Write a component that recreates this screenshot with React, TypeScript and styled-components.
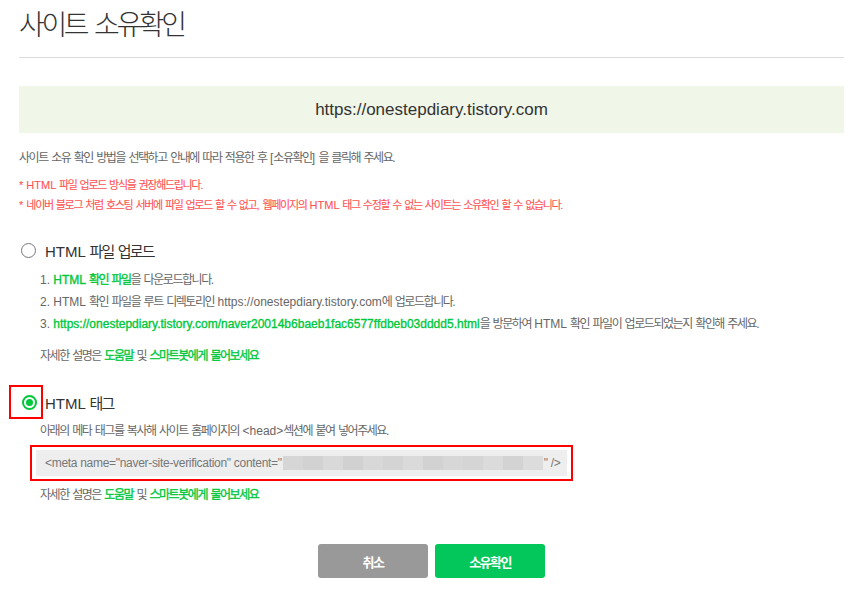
import React from 'react';
import styled, { createGlobalStyle } from 'styled-components';

const Global = createGlobalStyle`
  html, body { margin: 0; padding: 0; background: #fff; }
  body {
    font-family: "Liberation Sans", "Noto Sans CJK KR", sans-serif;
    color: #666;
  }
`;

const Hg = styled.span`
  letter-spacing: -0.12em;
`;

const HANGUL = /([\u1100-\u11ff\u3130-\u318f\uac00-\ud7a3]+)/;
function ko(text: string): React.ReactNode[] {
  return text.split(HANGUL).map((part, i) => (i % 2 === 1 ? <Hg key={i}>{part}</Hg> : part));
}

const Page = styled.div`
  width: 825px;
  padding: 0 11px 0 19px;
`;

const Header = styled.header`
  height: 57px;
  border-bottom: 1px solid #dcdcdc;
`;

const Title = styled.h1`
  margin: 0;
  padding-top: 2px;
  font-size: 28px;
  line-height: 48px;
  font-weight: 300;
  color: #333;
`;

const SiteBox = styled.div`
  margin-top: 28px;
  height: 47px;
  background: #f0f6e8;
  display: flex;
  align-items: center;
  justify-content: center;
  font-size: 17px;
  color: #333;
`;

const Desc = styled.p`
  margin: 15px 0 0;
  font-size: 12px;
  line-height: 20px;
  color: #666;
`;

const Notices = styled.ul`
  margin: 7px 0 0;
  padding: 0;
  list-style: none;
`;

const Notice = styled.li`
  font-size: 11px;
  line-height: 20px;
  color: #ff5252;
  -webkit-text-stroke: 0.1px #ff5252;
`;

const OptionRow = styled.div<{ $gap: number }>`
  display: flex;
  align-items: center;
  margin-top: ${(p) => p.$gap}px;
  min-height: 20px;
`;

const OptionLabel = styled.span`
  font-size: 15px;
  color: #333;
`;

const Radio = styled.span<{ $checked?: boolean }>`
  box-sizing: border-box;
  flex: none;
  width: 15px;
  height: 15px;
  border-radius: 50%;
  border: ${(p) => (p.$checked ? '2px solid #00c73c' : '1.5px solid #777')};
  display: flex;
  align-items: center;
  justify-content: center;
  &::after {
    content: '';
    width: 7px;
    height: 7px;
    border-radius: 50%;
    background: ${(p) => (p.$checked ? '#00c73c' : 'transparent')};
  }
`;

const PlainRadioWrap = styled.span`
  display: flex;
  margin-left: 2px;
  margin-right: 9px;
`;

const Highlight = styled.span`
  box-sizing: border-box;
  flex: none;
  width: 34px;
  height: 34px;
  margin-left: -10px;
  margin-right: 2px;
  border: 2px solid #f00;
  display: flex;
  align-items: center;
  padding-left: 11px;
`;

const OptionBody = styled.div`
  padding-left: 21px;
`;

const Steps = styled.ol`
  margin: 8px 0 0;
  padding: 0;
  list-style: none;
`;

const Step = styled.li`
  font-size: 12px;
  line-height: 22px;
  color: #666;
  white-space: nowrap;
`;

const Link = styled.a`
  color: #00c73c;
  font-weight: 400;
  -webkit-text-stroke: 0.35px #00c73c;
  text-decoration: none;
`;

const Help = styled.p<{ $gap: number }>`
  margin: ${(p) => p.$gap}px 0 0;
  font-size: 12px;
  line-height: 20px;
  color: #666;
`;

const Guide = styled.p`
  margin: 2px 0 0;
  font-size: 12px;
  line-height: 20px;
  color: #666;
`;

const MetaFrame = styled.div`
  box-sizing: border-box;
  margin: 4px 0 0 -10px;
  width: 543px;
  border: 2px solid #f00;
  padding: 3px 4px;
`;

const MetaCode = styled.div`
  height: 26px;
  background: #eee;
  display: flex;
  align-items: center;
  padding-left: 9px;
  font-size: 12px;
  letter-spacing: -0.3px;
  color: #777;
  white-space: pre;
`;

const Mosaic = styled.span`
  display: inline-flex;
  height: 14px;
  margin: 0 1px;
`;

const Tile = styled.span<{ $shade: string }>`
  width: 20px;
  height: 14px;
  background: ${(p) => p.$shade};
`;

const Actions = styled.div`
  margin-top: 39px;
  display: flex;
  justify-content: center;
  gap: 7px;
`;

const Button = styled.button<{ $primary?: boolean }>`
  width: 110px;
  height: 34px;
  border: 0;
  border-radius: 3px;
  background: ${(p) => (p.$primary ? '#03c75a' : '#999')};
  color: #fff;
  font-family: inherit;
  font-size: 13px;
  font-weight: 700;
  cursor: pointer;
`;

const shades = [
  '#d6d6d6', '#d2d2d2', '#d9d9d9', '#d1d1d1', '#d8d8d8', '#d4d4d4', '#dadada',
  '#d2d2d2', '#d7d7d7', '#d5d5d5', '#dbdbdb', '#d3d3d3', '#dcdcdc',
];

function HelpLine({ gap }: { gap: number }) {
  return (
    <Help $gap={gap}>
      {ko('자세한 설명은 ')}
      <Link>{ko('도움말')}</Link>
      {ko(' 및 ')}
      <Link>{ko('스마트봇에게 물어보세요')}</Link>
    </Help>
  );
}

export default function App() {
  return (
    <>
      <Global />
      <Page>
        <Header>
          <Title>{ko('사이트 소유확인')}</Title>
        </Header>
        <SiteBox>https://onestepdiary.tistory.com</SiteBox>
        <Desc>{ko('사이트 소유 확인 방법을 선택하고 안내에 따라 적용한 후 [소유확인] 을 클릭해 주세요.')}</Desc>
        <Notices>
          <Notice>{ko('* HTML 파일 업로드 방식을 권장해드립니다.')}</Notice>
          <Notice>
            {ko('* 네이버 블로그 처럼 호스팅 서버에 파일 업로드 할 수 없고, 웹페이지의 HTML 태그 수정할 수 없는 사이트는 소유확인 할 수 없습니다.')}
          </Notice>
        </Notices>

        <OptionRow $gap={25}>
          <PlainRadioWrap>
            <Radio />
          </PlainRadioWrap>
          <OptionLabel>{ko('HTML 파일 업로드')}</OptionLabel>
        </OptionRow>
        <OptionBody>
          <Steps>
            <Step>
              1. <Link>{ko('HTML 확인 파일')}</Link>
              {ko('을 다운로드합니다.')}
            </Step>
            <Step>{ko('2. HTML 확인 파일을 루트 디렉토리인 https://onestepdiary.tistory.com에 업로드합니다.')}</Step>
            <Step>
              3. <Link>https://onestepdiary.tistory.com/naver20014b6baeb1fac6577ffdbeb03dddd5.html</Link>
              {ko('을 방문하여 HTML 확인 파일이 업로드되었는지 확인해 주세요.')}
            </Step>
          </Steps>
          <HelpLine gap={11} />
        </OptionBody>

        <OptionRow $gap={19}>
          <Highlight>
            <Radio $checked />
          </Highlight>
          <OptionLabel>{ko('HTML 태그')}</OptionLabel>
        </OptionRow>
        <OptionBody>
          <Guide>{ko('아래의 메타 태그를 복사해 사이트 홈페이지의 <head>섹션에 붙여 넣어주세요.')}</Guide>
          <MetaFrame>
            <MetaCode>
              {'<meta name="naver-site-verification" content="'}
              <Mosaic>
                {shades.map((s, i) => (
                  <Tile key={i} $shade={s} />
                ))}
              </Mosaic>
              {'" />'}
            </MetaCode>
          </MetaFrame>
          <HelpLine gap={4} />
        </OptionBody>

        <Actions>
          <Button>{ko('취소')}</Button>
          <Button $primary>{ko('소유확인')}</Button>
        </Actions>
      </Page>
    </>
  );
}
